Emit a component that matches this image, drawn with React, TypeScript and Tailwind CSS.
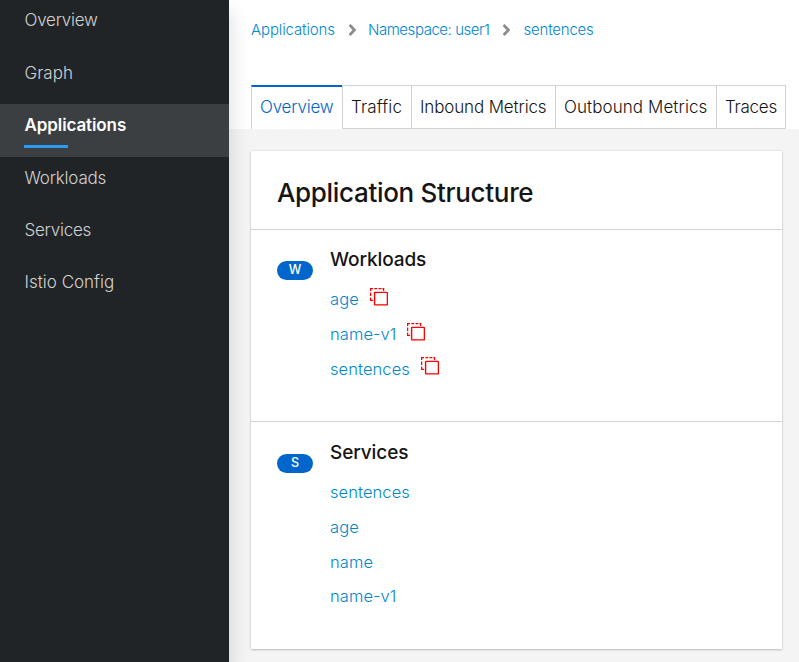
import React from "react";
import { FaAngleRight } from "react-icons/fa";

const navItems = [
  { label: "Overview", track: "tracking-[-0.25px]" },
  { label: "Graph", track: "tracking-[0.05px]" },
  { label: "Applications", track: "tracking-[-0.1px]", active: true },
  { label: "Workloads", track: "tracking-[-0.2px]" },
  { label: "Services", track: "tracking-[-0.25px]" },
  { label: "Istio Config", track: "tracking-[0px]" },
];

const tabs = [
  { label: "Traffic", width: "w-[69px]", track: "tracking-[0.15px]" },
  { label: "Inbound Metrics", width: "w-[144px]", track: "tracking-[-0.14px]" },
  { label: "Outbound Metrics", width: "w-[161px]", track: "tracking-[0.08px]" },
  { label: "Traces", width: "w-[70px] border-r", track: "tracking-[-0.25px]" },
];

function MissingSidecarIcon() {
  return (
    <svg width="18" height="18" viewBox="0 0 18 18" fill="none" stroke="#f00" className="shrink-0">
      <path d="M0.6 3V0.6H3M4.3 0.6H7.2M8.5 0.6H11.4M12.4 0.6H13.6V3M0.6 4.5V8M0.6 9.4V12.4H3" strokeWidth="1.3" />
      <rect x="4.6" y="4.4" width="12.8" height="12.5" rx="0.6" strokeWidth="1.4" />
    </svg>
  );
}

function Badge({ letter, offset }: { letter: string; offset: string }) {
  return (
    <span
      className={
        "flex h-[19px] w-9 shrink-0 justify-center rounded-full bg-[#0066cc] text-[12.5px] leading-[18px] font-medium text-white " +
        offset
      }
    >
      {letter}
    </span>
  );
}

function Item({ label, iconGap }: { label: string; iconGap?: string }) {
  return (
    <li className="flex h-[34.7px] items-center">
      <a className="text-[16.5px] leading-6 font-light tracking-[0.08px] text-[#0088ce]">{label}</a>
      {iconGap && (
        <span className={"-mt-[5px] " + iconGap}>
          <MissingSidecarIcon />
        </span>
      )}
    </li>
  );
}

export default function App() {
  return (
    <div className="flex h-[662px] w-[799px] overflow-hidden bg-[#f4f4f4] font-['Inter',sans-serif]">
      <nav className="z-10 w-[229px] shrink-0 bg-[#212427] shadow-[1px_12px_18px_1px_rgba(3,3,3,0.13)]">
        <ul>
          {navItems.map((n, i) => (
            <li
              key={n.label}
              className={
                "pl-[24.5px] text-[17px] leading-6 " +
                (i === 0 ? "h-[52px] pt-2 " : n.active ? "h-[53px] pt-[9px] " : i === 1 ? "h-[52px] pt-[9px] " : "h-[52.2px] pt-[9px] ") +
                (n.active ? "bg-[#3c3f42] font-semibold text-white" : "font-light text-[#d2d2d2]")
              }
            >
              <span className={n.track}>{n.label}</span>
              {n.active && <div className="mt-2 -ml-[0.5px] h-[3px] w-11 bg-[#2b9af3]" />}
            </li>
          ))}
        </ul>
      </nav>
      <main className="flex min-w-0 flex-1 flex-col">
        <header className="h-[129px] shrink-0 bg-white pl-[22px]">
          <div className="flex h-[85px] pt-[19px] text-[15px] leading-[22px] font-light whitespace-nowrap text-[#0088ce]">
            <span className="w-[97px] tracking-[-0.12px]">Applications</span>
            <FaAngleRight className="mt-[2px] h-[18px] w-[9px] text-[#8a8d90]" />
            <span className="ml-[11px] w-[134px] tracking-[-0.45px]">Namespace: user1</span>
            <FaAngleRight className="mt-[2px] h-[18px] w-[9px] text-[#8a8d90]" />
            <span className="ml-[12.5px] tracking-[-0.2px]">sentences</span>
          </div>
          <div className="flex h-11 text-[17px] leading-[42px] font-light whitespace-nowrap text-[#151515]">
            <div className="w-[91px] border-t-2 border-l border-t-[#0066cc] border-l-[#d2d2d2] pl-2 leading-[40px] tracking-[-0.2px] text-[#0066cc]">
              Overview
            </div>
            {tabs.map((t) => (
              <div key={t.label} className={"border-y border-l border-[#d2d2d2] pl-2 " + t.width}>
                <span className={t.track}>{t.label}</span>
              </div>
            ))}
          </div>
        </header>
        <section className="mt-[22px] ml-[22px] h-[498px] w-[531px] bg-white text-[#151515] shadow-[0_1px_2px_0_rgba(3,3,3,0.2),0_0_2px_0_rgba(3,3,3,0.12)]">
          <h1 className="h-[79px] border-b border-[#d2d2d2] pt-6 pl-[26px] text-[26px] leading-9 font-[450] tracking-[-0.32px]">
            Application Structure
          </h1>
          <div className="flex h-48 border-b border-[#d2d2d2] pl-[26px]">
            <Badge letter="W" offset="mt-[31px]" />
            <div className="pt-[18px] pl-[17px]">
              <h2 className="text-[19px] leading-6 font-[450] tracking-[-0.1px]">Workloads</h2>
              <ul className="mt-[10px]">
                <Item label="age" iconGap="ml-[11.5px]" />
                <Item label="name-v1" iconGap="ml-[10.5px]" />
                <Item label="sentences" iconGap="ml-[11.5px]" />
              </ul>
            </div>
          </div>
          <div className="flex pl-[26px]">
            <Badge letter="S" offset="mt-8" />
            <div className="pt-[19px] pl-[17px]">
              <h2 className="text-[19px] leading-6 font-[450] tracking-[-0.1px]">Services</h2>
              <ul className="mt-[10px]">
                <Item label="sentences" />
                <Item label="age" />
                <Item label="name" />
                <Item label="name-v1" />
              </ul>
            </div>
          </div>
        </section>
      </main>
    </div>
  );
}
